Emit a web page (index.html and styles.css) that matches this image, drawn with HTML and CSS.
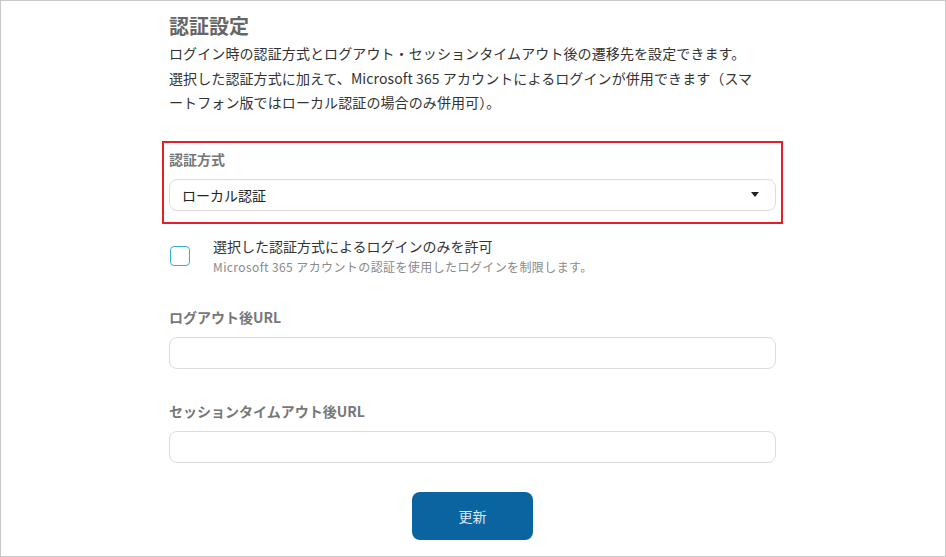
FILE: index.html
```html
<!DOCTYPE html>
<html>
<head>
  <title>認証設定</title>
  <link rel="stylesheet" href="styles.css">
</head>
<body>
  <div class="frame">
    <div class="content">
      <h1 class="title">認証設定</h1>
      <p class="lead">
        <span class="lead-line">ログイン時の認証方式とログアウト・セッションタイムアウト後の遷移先を設定できます。</span>
        <span class="lead-line">選択した認証方式に加えて、Microsoft 365 アカウントによるログインが併用できます（スマ</span>
        <span class="lead-line">ートフォン版ではローカル認証の場合のみ併用可）。</span>
      </p>

      <div class="field highlight">
        <label class="label">認証方式</label>
        <div class="select">
          <span>ローカル認証</span>
          <span class="caret"></span>
        </div>
      </div>

      <div class="check-row">
        <span class="checkbox"></span>
        <div class="check-text">
          <div class="check-main">選択した認証方式によるログインのみを許可</div>
          <div class="check-sub">Microsoft 365 アカウントの認証を使用したログインを制限します。</div>
        </div>
      </div>

      <div class="field">
        <label class="label">ログアウト後URL</label>
        <input class="input" type="text">
      </div>

      <div class="field field-next">
        <label class="label">セッションタイムアウト後URL</label>
        <input class="input" type="text">
      </div>

      <div class="actions">
        <button class="btn">更新</button>
      </div>
    </div>
  </div>
</body>
</html>
```

FILE: styles.css
```css
body {
  margin: 0;
  font-family: "Noto Sans CJK JP", sans-serif;
  color: #333;
  background: #fff;
}
.frame {
  box-sizing: border-box;
  width: 946px;
  height: 557px;
  border: 1px solid #c8c8c8;
  overflow: hidden;
}
.content {
  width: 607px;
  margin-left: 168px;
  padding-top: 11px;
}
.title {
  margin: 0;
  font-size: 20px;
  font-weight: bold;
  color: #666;
  line-height: 28px;
}
.lead {
  margin: 1px 0 0;
  font-size: 14px;
  letter-spacing: 0.1px;
}
.lead-line {
  display: block;
  height: 24.5px;
  line-height: 24.5px;
  white-space: nowrap;
}
.field {
  margin-top: 30px;
}
.field-next {
  margin-top: 32px;
}
.highlight {
  margin: 26px -7px 0;
  padding: 6px 5px 11px;
  border: 2px solid #e3202a;
}
.label {
  display: block;
  font-size: 14px;
  font-weight: bold;
  color: #777;
  line-height: 20px;
  margin-bottom: 10px;
}
.select {
  display: flex;
  align-items: center;
  justify-content: space-between;
  box-sizing: border-box;
  height: 32px;
  padding: 0 16px 0 12px;
  border: 1px solid #dcdcdc;
  border-radius: 8px;
  font-size: 14px;
  color: #222;
}
.caret {
  width: 0;
  height: 0;
  border-left: 4px solid transparent;
  border-right: 4px solid transparent;
  border-top: 5px solid #222;
}
.check-row {
  display: flex;
  align-items: center;
  margin-top: 11px;
}
.checkbox {
  box-sizing: border-box;
  width: 20px;
  height: 20px;
  border: 1.5px solid #3aaed0;
  border-radius: 4px;
  margin-left: 1px;
  margin-right: 23px;
}
.check-main {
  font-size: 14px;
  line-height: 22px;
  color: #333;
}
.check-sub {
  font-size: 12px;
  letter-spacing: 0.4px;
  line-height: 20px;
  color: #8a8a8a;
}
.input {
  display: block;
  box-sizing: border-box;
  width: 100%;
  height: 32px;
  border: 1px solid #dcdcdc;
  border-radius: 8px;
  outline: none;
}
.actions {
  display: flex;
  justify-content: center;
  margin-top: 29px;
}
.btn {
  width: 121px;
  height: 48px;
  border: none;
  border-radius: 8px;
  background: #0a64a0;
  color: #dbe9f6;
  font-family: inherit;
  font-size: 14px;
}
```
